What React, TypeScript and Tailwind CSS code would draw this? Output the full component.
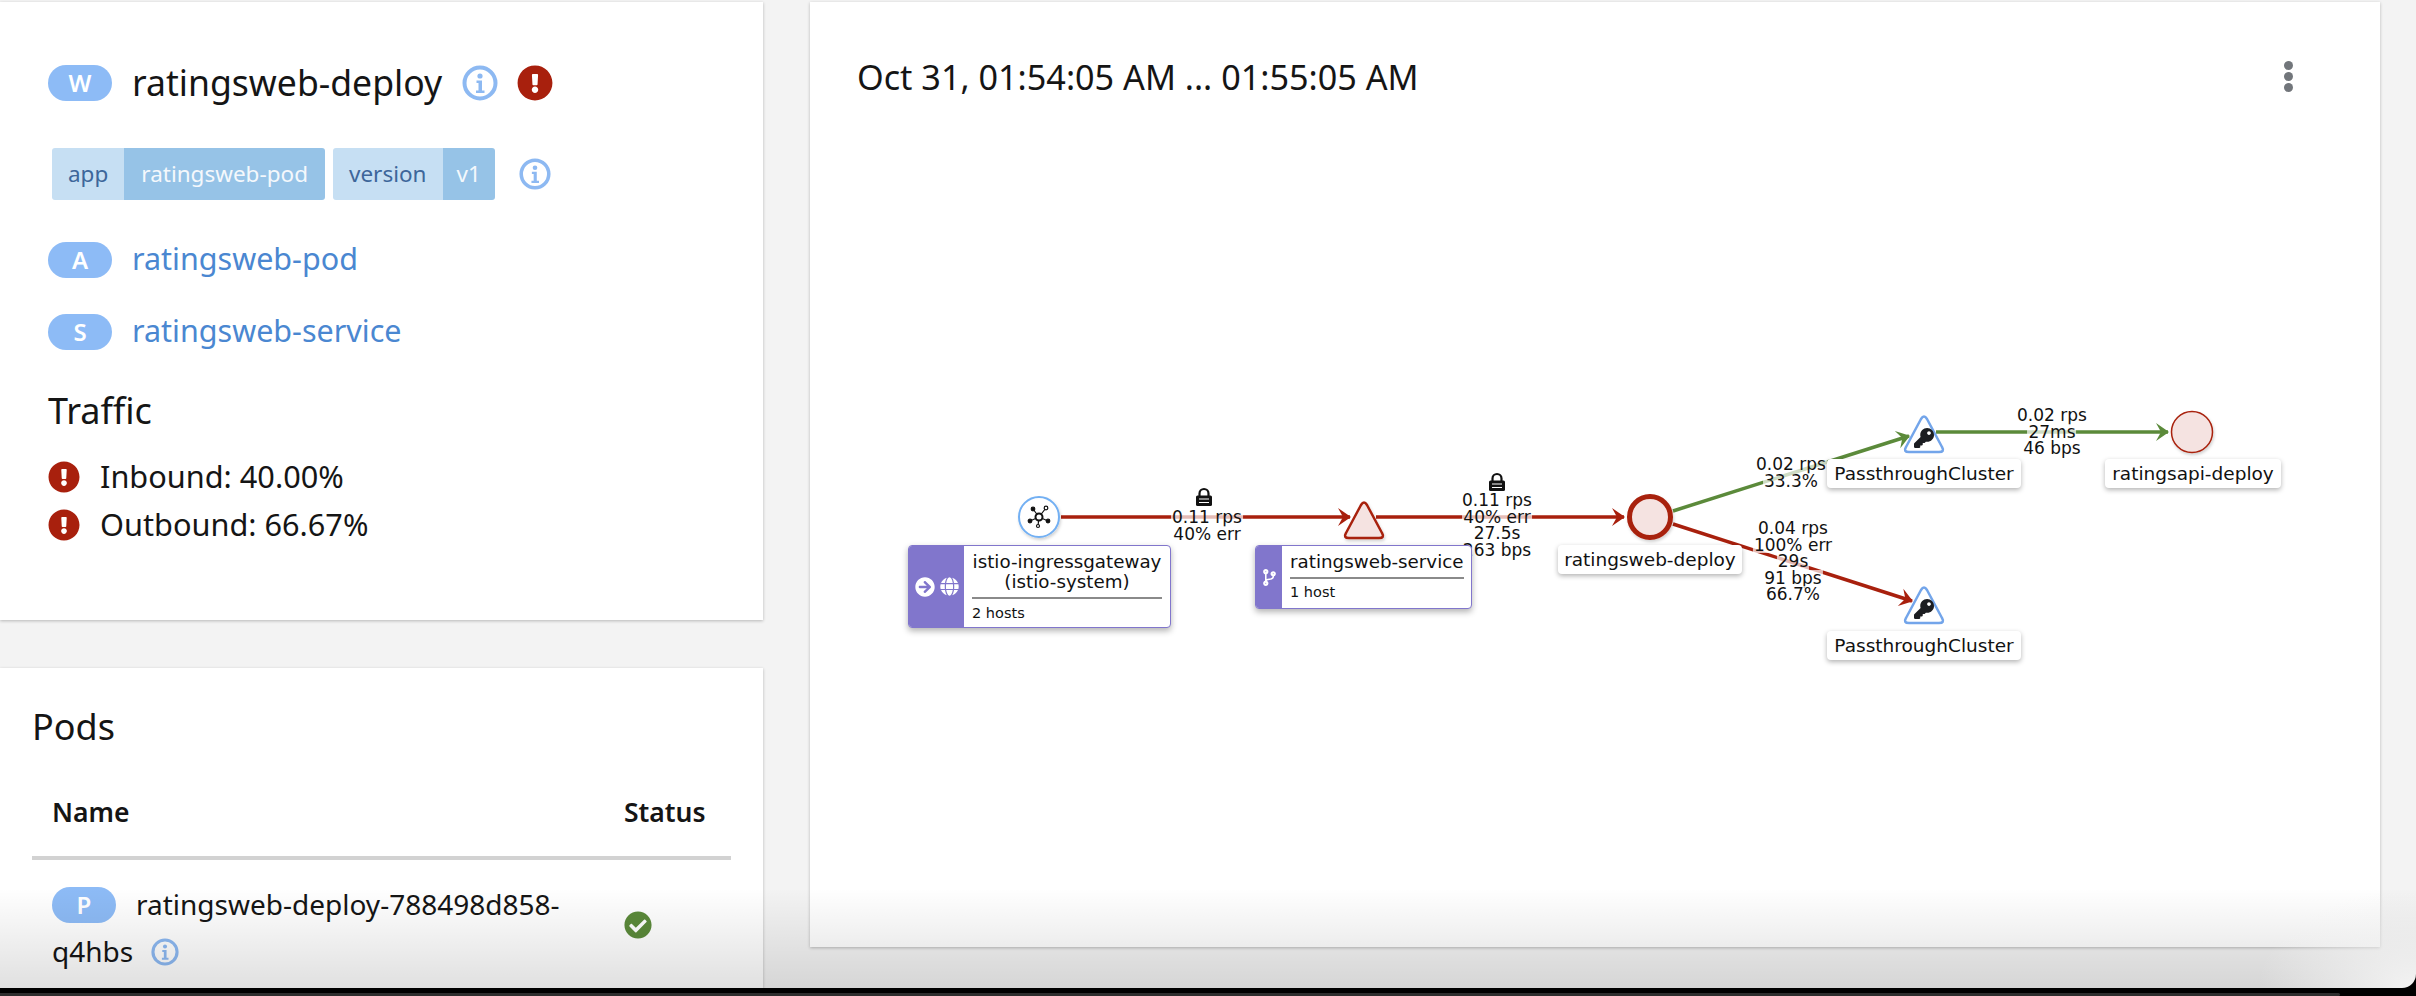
import { FaArrowCircleRight, FaCheckCircle, FaCodeBranch, FaExclamationCircle, FaGlobe, FaKey } from 'react-icons/fa';

const RED = '#a8200d';
const GREEN = '#5b8a3a';
const PURPLE = '#8176cc';

// page coordinates of the graph card, everything on the canvas is measured from the page
const OX = 810;
const OY = 2;

function InfoIcon({ size }: { size: number }) {
  return (
    <svg width={size} height={size} viewBox="0 0 36 36" className="shrink-0">
      <circle cx="18" cy="18" r="15.5" fill="#fff" stroke="#8db9f2" strokeWidth="4" />
      <circle cx="18" cy="11" r="2.6" fill="#8db9f2" />
      <path d="M14.5 15.5h5.5v10h2.5v2.5h-8.5v-2.5h2.5v-7.500h-2z" fill="#8db9f2" />
    </svg>
  );
}

function Badge({ letter }: { letter: string }) {
  return (
    <span className="flex h-[36px] w-[64px] shrink-0 items-center justify-center rounded-full bg-[#8dbbf6] text-[24px] font-semibold leading-none text-white">
      {letter}
    </span>
  );
}

function Label({ name, value, valueClass }: { name: string; value: string; valueClass: string }) {
  return (
    <span className="flex h-[52px] items-center overflow-hidden rounded-[3px] text-[22.500px]">
      <span className="flex h-full items-center bg-[#c6dff3] px-[16px] text-[#3d669a]">{name}</span>
      <span className={`flex h-full items-center bg-[#96c3e7] text-[#f4f8fc] ${valueClass}`}>{value}</span>
    </span>
  );
}

function LockIcon({ x, y }: { x: number; y: number }) {
  return (
    <g transform={`translate(${x - OX - 8} ${y - OY - 9})`}>
      <path d="M3.500 8V5.500a4.500 4.500 0 0 1 9 0V8" fill="none" stroke="#111" strokeWidth="2.200" />
      <rect x="0" y="7.500" width="16" height="10.500" rx="1.500" fill="#111" />
      <path d="M3 11h10M3 14.500h10" stroke="#fff" strokeWidth="1" />
    </g>
  );
}

function Triangle({ x, top, stroke, fill, children }: { x: number; top: number; stroke: string; fill: string; children?: React.ReactNode }) {
  const cx = x - OX;
  const y = top - OY;
  return (
    <g>
      <path
        d={`M${cx - 3} ${y + 3}Q${cx} ${y - 2} ${cx + 3} ${y + 3}L${cx + 18} ${y + 31}Q${cx + 21} ${y + 36} ${cx + 15} ${y + 36}H${cx - 15}Q${cx - 21} ${y + 36} ${cx - 18} ${y + 31}Z`}
        fill={fill}
        stroke={stroke}
        strokeWidth="2.500"
        strokeLinejoin="round"
      />
      {children}
    </g>
  );
}

const edges = [
  { x1: 1061, y1: 517, x2: 1350, y2: 517, color: RED, marker: 'url(#arrow-red)' },
  { x1: 1376, y1: 517, x2: 1624, y2: 517, color: RED, marker: 'url(#arrow-red)' },
  { x1: 1673, y1: 511, x2: 1909, y2: 436, color: GREEN, marker: 'url(#arrow-green)' },
  { x1: 1936, y1: 432, x2: 2168, y2: 432, color: GREEN, marker: 'url(#arrow-green)' },
  { x1: 1673, y1: 524, x2: 1912, y2: 601, color: RED, marker: 'url(#arrow-red)' },
];

const edgeLabels = [
  { x: 1207, y: 509, lines: ['0.11 rps', '40% err'] },
  { x: 1497, y: 492, lines: ['0.11 rps', '40% err', '27.5s', '263 bps'] },
  { x: 1791, y: 456, lines: ['0.02 rps', '33.3%'] },
  { x: 2052, y: 407, lines: ['0.02 rps', '27ms', '46 bps'] },
  { x: 1793, y: 520, lines: ['0.04 rps', '100% err', '29s', '91 bps', '66.7%'] },
];

const nodeLabels = [
  { left: 1558, top: 545, width: 184, text: 'ratingsweb-deploy' },
  { left: 1827, top: 459, width: 194, text: 'PassthroughCluster' },
  { left: 2105, top: 459, width: 176, text: 'ratingsapi-deploy' },
  { left: 1827, top: 631, width: 194, text: 'PassthroughCluster' },
];

function Graph() {
  return (
    <div className="relative h-[945px] w-[1570px] shrink-0 bg-white shadow-[0_1px_3px_rgba(0,0,0,0.25)]">
      <div className="flex items-start justify-between pl-[47px] pr-[87px] pt-[53px]">
        <h2 className="text-[34.200px] leading-[44px] text-[#151515]">Oct 31, 01:54:05 AM ... 01:55:05 AM</h2>
        <div className="flex flex-col gap-[2px] pt-[6px]">
          <span className="h-[9px] w-[9px] rounded-full bg-[#72767b]" />
          <span className="h-[9px] w-[9px] rounded-full bg-[#72767b]" />
          <span className="h-[9px] w-[9px] rounded-full bg-[#72767b]" />
        </div>
      </div>

      <svg className="absolute left-0 top-0" width="1570" height="945">
        <defs>
          <marker id="arrow-red" markerUnits="userSpaceOnUse" markerWidth="16" markerHeight="24" refX="13" refY="12" orient="auto">
            <path d="M1 3L14 12L1 21L6 12Z" fill={RED} />
          </marker>
          <marker id="arrow-green" markerUnits="userSpaceOnUse" markerWidth="16" markerHeight="24" refX="13" refY="12" orient="auto">
            <path d="M1 3L14 12L1 21L6 12Z" fill={GREEN} />
          </marker>
          <filter id="soft" x="-20%" y="-20%" width="140%" height="150%">
            <feDropShadow dx="1" dy="2" stdDeviation="1.500" floodColor="#000" floodOpacity="0.18" />
          </filter>
        </defs>

        {edges.map((e) => (
          <line
            key={`${e.x1}-${e.y1}`}
            x1={e.x1 - OX}
            y1={e.y1 - OY}
            x2={e.x2 - OX}
            y2={e.y2 - OY}
            stroke={e.color}
            strokeWidth="3.500"
            markerEnd={e.marker}
          />
        ))}

        {/* gateway */}
        <g filter="url(#soft)">
          <circle cx={1039 - OX} cy={517 - OY} r="20" fill="#fff" stroke="#73b0f3" strokeWidth="2" />
        </g>
        <g transform={`translate(${1039 - OX} ${517 - OY})`} fill="#111" stroke="#111" strokeWidth="1.200">
          <path d="M0 0L-6 -8M0 0L7 -9M0 0L-9 4M0 0L9 4M0 0L-1 9" />
          <circle cx="0" cy="0" r="3.500" fill="#fff" strokeWidth="2" />
          <circle cx="-6" cy="-8" r="1.800" />
          <circle cx="7" cy="-9" r="1.800" fill="#fff" />
          <circle cx="-9" cy="4" r="1.800" />
          <circle cx="9" cy="4" r="1.800" />
          <circle cx="-1" cy="9" r="1.500" fill="#fff" />
        </g>

        <g filter="url(#soft)">
          <Triangle x={1364} top={502} stroke={RED} fill="#f5e3e1" />
        </g>

        <g filter="url(#soft)">
          <circle cx={1650 - OX} cy={517 - OY} r="20.500" fill="#f5e3e1" stroke={RED} strokeWidth="5" />
        </g>

        <g filter="url(#soft)">
          <circle cx={2192 - OX} cy={432 - OY} r="20.500" fill="#f5e3e1" stroke={RED} strokeWidth="1.500" />
        </g>

        <Triangle x={1924} top={416} stroke="#73a5ea" fill="#fff">
          <FaKey x={1914 - OX} y={428 - OY} size={20} color="#1b1d21" />
        </Triangle>
        <Triangle x={1924} top={587} stroke="#73a5ea" fill="#fff">
          <FaKey x={1914 - OX} y={599 - OY} size={20} color="#1b1d21" />
        </Triangle>

        <LockIcon x={1204} y={497} />
        <LockIcon x={1497} y={482} />
      </svg>

      {edgeLabels.map((l) => (
        <div
          key={`${l.x}-${l.y}`}
          className="absolute flex -translate-x-1/2 flex-col items-center font-['DejaVu_Sans',sans-serif] text-[17px] leading-[16.500px] text-[#111]"
          style={{ left: l.x - OX, top: l.y - OY }}
        >
          {l.lines.map((t) => (
            <span key={t} className="bg-white/70 px-px">
              {t}
            </span>
          ))}
        </div>
      ))}

      {nodeLabels.map((n) => (
        <div
          key={`${n.left}-${n.top}`}
          className="absolute flex h-[29px] items-center justify-center rounded-[4px] bg-white font-['DejaVu_Sans',sans-serif] text-[18.500px] text-[#111] shadow-[0_2px_5px_rgba(0,0,0,0.3)]"
          style={{ left: n.left - OX, top: n.top - OY, width: n.width }}
        >
          {n.text}
        </div>
      ))}

      {/* istio-ingressgateway box */}
      <div
        className="absolute flex overflow-hidden rounded-[4px] border-[1.500px] border-[#8176cc] bg-white font-['DejaVu_Sans',sans-serif] text-[#111] shadow-[0_3px_6px_rgba(0,0,0,0.3)]"
        style={{ left: 908 - OX, top: 545 - OY, width: 263, height: 83 }}
      >
        <div className="flex w-[55px] shrink-0 items-center justify-center gap-[5px]" style={{ background: PURPLE }}>
          <FaArrowCircleRight size={20} color="#fff" />
          <FaGlobe size={19} color="#fff" />
        </div>
        <div className="flex flex-1 flex-col px-[8px] pt-[6px]">
          <div className="text-center text-[18.300px] leading-[20px] whitespace-nowrap">
            istio-ingressgateway
            <br />
            (istio-system)
          </div>
          <div className="mt-[5px] h-[2px] bg-[#8a8a8a]" />
          <div className="mt-[5px] text-[14.500px] leading-[18px]">2 hosts</div>
        </div>
      </div>

      {/* ratingsweb-service box */}
      <div
        className="absolute flex overflow-hidden rounded-[4px] border-[1.500px] border-[#8176cc] bg-white font-['DejaVu_Sans',sans-serif] text-[#111] shadow-[0_3px_6px_rgba(0,0,0,0.3)]"
        style={{ left: 1255 - OX, top: 545 - OY, width: 217, height: 64 }}
      >
        <div className="flex w-[26px] shrink-0 items-center justify-center" style={{ background: PURPLE }}>
          <FaCodeBranch size={17} color="#fff" />
        </div>
        <div className="flex flex-1 flex-col px-[8px] pt-[6px]">
          <div className="text-[18.300px] leading-[20px] whitespace-nowrap">ratingsweb-service</div>
          <div className="mt-[5px] h-[2px] bg-[#8a8a8a]" />
          <div className="mt-[4px] text-[14.500px] leading-[18px]">1 host</div>
        </div>
      </div>
    </div>
  );
}

function Sidebar() {
  return (
    <div className="flex w-[763px] shrink-0 flex-col gap-[48px]">
      <section className="h-[618px] bg-white pl-[48px] pt-[63px] shadow-[0_1px_3px_rgba(0,0,0,0.25)]">
        <div className="flex h-[36px] items-center">
          <Badge letter="W" />
          <h1 className="ml-[20px] pb-[2px] text-[35.600px] leading-[36px] text-[#151515]">ratingsweb-deploy</h1>
          <span className="ml-[20px]">
            <InfoIcon size={36} />
          </span>
          <FaExclamationCircle size={36} color={RED} className="ml-[19px]" />
        </div>

        <div className="ml-[4px] mt-[47px] flex items-center gap-[8px]">
          <Label name="app" value="ratingsweb-pod" valueClass="px-[17px]" />
          <Label name="version" value="v1" valueClass="px-[14px]" />
          <span className="ml-[16px]">
            <InfoIcon size={32} />
          </span>
        </div>

        <div className="mt-[42px] flex h-[36px] items-center gap-[20px]">
          <Badge letter="A" />
          <a className="pb-[5px] text-[30.500px] leading-[36px] text-[#4a87d1]">ratingsweb-pod</a>
        </div>
        <div className="mt-[36px] flex h-[36px] items-center gap-[20px]">
          <Badge letter="S" />
          <a className="pb-[5px] text-[30.500px] leading-[36px] text-[#4a87d1]">ratingsweb-service</a>
        </div>

        <h3 className="mt-[39px] text-[36px] leading-[44px] text-[#151515]">Traffic</h3>
        <div className="mt-[28px] flex h-[32px] items-center gap-[20px] text-[30.700px] leading-[32px] text-[#151515]">
          <FaExclamationCircle size={32} color={RED} />
          <span className="pb-[2px]">Inbound: 40.00%</span>
        </div>
        <div className="mt-[16px] flex h-[32px] items-center gap-[20px] text-[30.700px] leading-[32px] text-[#151515]">
          <FaExclamationCircle size={32} color={RED} />
          <span className="pb-[2px]">Outbound: 66.67%</span>
        </div>
      </section>

      <section className="flex-1 bg-white px-[32px] pt-[37px] shadow-[0_1px_3px_rgba(0,0,0,0.25)]">
        <h3 className="text-[36px] leading-[44px] text-[#151515]">Pods</h3>
        <div className="mt-[45px] flex justify-between px-[20px] pb-[26px] text-[26.500px] font-semibold leading-[36px] text-[#151515]">
          <span>Name</span>
          <span className="w-[87px]">Status</span>
        </div>
        <div className="h-[4px] bg-[#d2d2d2]" />
        <div className="mt-[21px] flex justify-between px-[20px]">
          <div className="w-[540px] text-[28px] text-[#151515]">
            <div className="flex h-[48px] items-center gap-[20px]">
              <Badge letter="P" />
              <span className="pb-[2px]">ratingsweb-deploy-788498d858-</span>
            </div>
            <div className="flex h-[46px] items-center gap-[18px]">
              <span className="pb-[2px]">q4hbs</span>
              <InfoIcon size={28} />
            </div>
          </div>
          <span className="w-[87px] pt-[30px]">
            <FaCheckCircle size={28} color={GREEN} />
          </span>
        </div>
      </section>
    </div>
  );
}

export default function App() {
  return (
    <div className="relative flex h-[996px] w-[2416px] flex-col overflow-hidden bg-[#f3f3f3] font-['Noto_Sans',sans-serif]">
      <div className="flex min-h-0 flex-1 gap-[47px] pt-[2px]">
        <Sidebar />
        <Graph />
      </div>

      {/* window shadow fading over the bottom of the page */}
      <div className="pointer-events-none absolute bottom-[8px] left-0 h-[100px] w-full bg-gradient-to-b from-transparent to-[rgba(0,0,0,0.12)]" />
      <div className="pointer-events-none absolute bottom-[8px] right-0 h-[100px] w-[160px] bg-[radial-gradient(ellipse_at_bottom_right,#f3f3f3,transparent_70%)]" />

      {/* rounded window corner */}
      <div className="pointer-events-none absolute bottom-[8px] right-0 h-[14px] w-[14px] overflow-hidden">
        <div className="h-full w-full rounded-br-[14px] shadow-[0_0_0_14px_#000]" />
      </div>

      <div className="h-[8px] bg-black pt-[5px]">
        <div className="h-[3px] w-[2340px] rounded-r-full bg-[#2e2e2e]" />
      </div>
    </div>
  );
}
